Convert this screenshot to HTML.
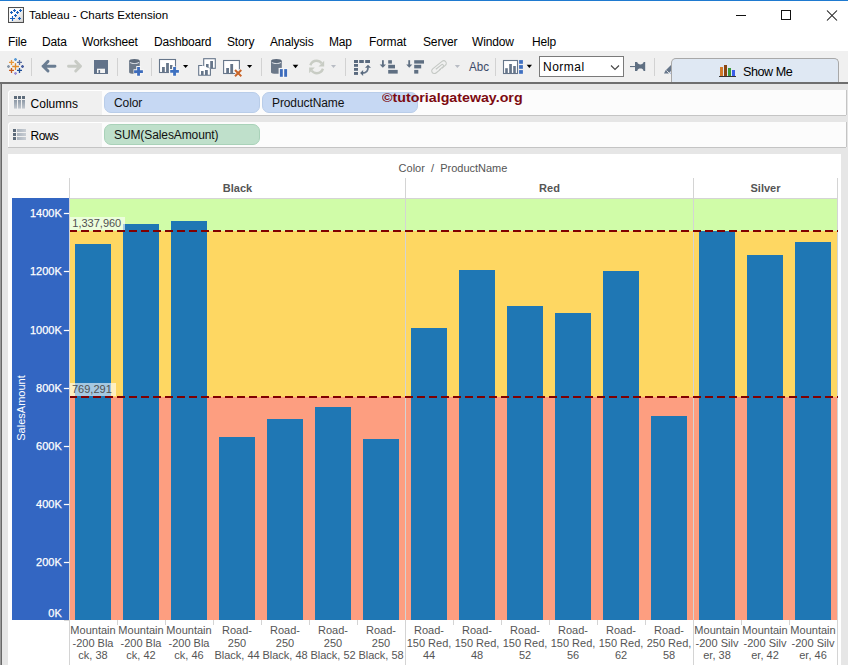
<!DOCTYPE html>
<html><head><meta charset="utf-8">
<style>
html,body{margin:0;padding:0;}
body{width:848px;height:665px;overflow:hidden;position:relative;background:#fff;font-family:"Liberation Sans",sans-serif;color:#000;}
.abs{position:absolute;}
#topline{left:0;top:0;width:848px;height:1px;background:#1f7ad0;}
#title{left:29px;top:8px;font-size:11.6px;color:#000;white-space:nowrap;}
.menu{position:absolute;top:34.6px;font-size:12px;letter-spacing:-0.15px;white-space:nowrap;}
#toolbar{left:0;top:51px;width:848px;height:31px;background:#f0f0f0;}
#tbline{left:0;top:82px;width:848px;height:2px;background:#6e6e6e;}
#work{left:0;top:84px;width:848px;height:581px;background:#e6e6e6;}
#leftline{left:0;top:84px;width:1px;height:581px;background:#9a9a9a;border-right:1px solid #686868;}
.shelf{position:absolute;left:8px;width:838px;height:25px;background:#fcfcfc;box-shadow:0 1px 0 #c4c4c4,1px 0 0 #c4c4c4;border-radius:4px 0 0 0;}
.shelflab{position:absolute;left:0;top:0;width:93px;height:24px;background:#f0f0f0;border-top:1px solid #fff;border-left:1px solid #fff;border-radius:4px 0 0 0;}
.shelftxt{position:absolute;left:22.6px;top:7px;font-size:12px;color:#000;}
.pill{position:absolute;height:19px;border:1px solid #b9cde9;border-radius:7px;font-size:12px;letter-spacing:-0.1px;color:#111;}
.pill span{position:absolute;left:9px;top:2.8px;}
#chart{left:8px;top:154px;width:833px;height:511px;background:#fff;}
</style></head><body>
<div class="abs" id="topline"></div>
<!-- title icon -->
<svg class="abs" style="left:8px;top:7px" width="16" height="16" viewBox="0 0 16 16">
<defs><linearGradient id="tig" x1="0" y1="0" x2="1" y2="1"><stop offset="0.5" stop-color="#ffffff"/><stop offset="0.52" stop-color="#f2f2f2"/><stop offset="1" stop-color="#d4d4d4"/></linearGradient></defs>
<rect x="0.5" y="0.5" width="15" height="15" fill="url(#tig)" stroke="#4f4f4f" stroke-width="1.1"/>
<g stroke="#1560bd" stroke-width="1.15">
<path d="M5.0 3.5h3M6.5 2.0v3"/>
<path d="M11.0 3.5h3M12.5 2.0v3"/>
<path d="M2.0 5.5h3M3.5 4.0v3"/>
<path d="M8.0 5.5h3M9.5 4.0v3"/>
<path d="M6.0 8.5h3M7.5 7.0v3"/>
<path d="M2.0 11.5h5M4.5 9.0v5"/>
<path d="M10.0 11.5h3M11.5 10.0v3"/>
</g>
</svg>
<div class="abs" id="title">Tableau - Charts Extension</div>
<!-- window controls -->
<svg class="abs" style="left:730px;top:8px" width="110" height="16" viewBox="0 0 110 16">
<path d="M6 7.5h10" stroke="#111" stroke-width="1"/>
<rect x="51.5" y="2.5" width="9" height="9" fill="none" stroke="#111"/>
<path d="M97 2.5l10 10M107 2.5l-10 10" stroke="#111" stroke-width="1.05"/>
</svg>
<div class="menu" style="left:8px">File</div>
<div class="menu" style="left:42px">Data</div>
<div class="menu" style="left:82px">Worksheet</div>
<div class="menu" style="left:154px">Dashboard</div>
<div class="menu" style="left:227px">Story</div>
<div class="menu" style="left:270px">Analysis</div>
<div class="menu" style="left:329px">Map</div>
<div class="menu" style="left:369px">Format</div>
<div class="menu" style="left:423px">Server</div>
<div class="menu" style="left:472px">Window</div>
<div class="menu" style="left:532px">Help</div>

<div class="abs" id="toolbar"></div>
<div class="abs" id="tbline"></div>
<!--TB-->
<svg class="abs" style="left:0;top:0" width="848" height="84" viewBox="0 0 848 84">
<!-- tableau logo -->
<g stroke-width="1.3" stroke-linecap="butt">
<path d="M12.2 66.5h6.8M15.5 63.2v6.8" stroke="#e08a2c"/>
<path d="M9 62.4h5M11.5 59.9v5" stroke="#e8963a"/>
<path d="M17 62.4h5M19.5 59.9v5" stroke="#5a6fa0"/>
<path d="M9 70.4h5M11.5 67.9v5" stroke="#c65a1e"/>
<path d="M17 70.4h5M19.5 67.9v5" stroke="#1f4f9a"/>
<path d="M14 59.5h3M15.5 58v3" stroke="#5b9bd5"/>
<path d="M14 73.4h3M15.5 71.9v3" stroke="#9b8fd8"/>
<path d="M7 66.5h3M8.5 65v3" stroke="#8a98a8"/>
<path d="M21 66.5h3M22.5 65v3" stroke="#4a5fa0"/>
</g>
<g fill="#d2d2d2">
<rect x="31" y="58" width="1" height="18"/>
<rect x="117" y="58" width="1" height="18"/>
<rect x="151" y="58" width="1" height="18"/>
<rect x="261" y="58" width="1" height="18"/>
<rect x="345" y="58" width="1" height="18"/>
<rect x="495" y="58" width="1" height="18"/>
<rect x="654" y="58" width="1" height="18"/>
</g>
<!-- back / forward -->
<path d="M55 66.2H43M48 61.4l-4.8 4.8 4.8 4.8" fill="none" stroke="#6a7d92" stroke-width="2.9" stroke-linecap="round" stroke-linejoin="round"/>
<path d="M68.5 66.2H80.5M75.7 61.4l4.8 4.8-4.8 4.8" fill="none" stroke="#c8cbc5" stroke-width="2.9" stroke-linecap="round" stroke-linejoin="round"/>
<!-- save -->
<rect x="94" y="60" width="14" height="14" fill="#62738a"/>
<rect x="97" y="68.7" width="8" height="4.3" fill="#f4f4f4"/>
<rect x="98.5" y="70" width="1.6" height="3" fill="#62738a"/>
<!-- datasource add -->
<path d="M129.1 61v11.2c0 1 2.4 1.6 5.35 1.6s5.35-.6 5.35-1.6V61z" fill="#6b7889"/>
<ellipse cx="134.45" cy="61" rx="5.35" ry="2" fill="#5d6a7b"/>
<path d="M129.8 62.2c1 1 3 1.3 4.65 1.3s3.65-.3 4.65-1.3" fill="none" stroke="#f4f6f8" stroke-width="0.9"/>
<path d="M133.5 71.55h10.4M138.55 66v10.6" stroke="#f6f6f6" stroke-width="4.6"/>
<path d="M134.1 71.55h8.8M138.55 67.1v8.6" stroke="#3d6cbc" stroke-width="2.8"/>
<!-- new sheet -->
<rect x="159.5" y="59.5" width="16" height="13" fill="#fff" stroke="#66768a" stroke-width="1.1"/>
<rect x="162" y="67" width="2.8" height="5.5" fill="#66768a"/>
<rect x="166.1" y="63" width="2.8" height="9.5" fill="#66768a"/>
<rect x="170" y="65" width="2.5" height="4" fill="#66768a"/>
<path d="M169 69.5h3v-3h4v3h3.5v4h-3.5v3h-4v-3h-3z" fill="#f8f8f8"/>
<path d="M170.2 71.4h8.7M174.55 67v8.7" stroke="#3d70c0" stroke-width="2.8"/>
<path d="M183 65h5.2l-2.6 3z" fill="#000"/>
<!-- duplicate -->
<rect x="203.7" y="58.7" width="11.6" height="9.6" fill="#fff" stroke="#66768a" stroke-width="1.1"/>
<rect x="206" y="64" width="2.6" height="4.3" fill="#66768a"/>
<rect x="210.2" y="61" width="2.8" height="7.3" fill="#66768a"/>
<path d="M202.4 65.5h-3.7v9.8h11.7v-6.5" fill="#fff" stroke="#66768a" stroke-width="1.1"/>
<rect x="201" y="71" width="2.6" height="4" fill="#66768a"/>
<rect x="205" y="70" width="2.8" height="5" fill="#66768a"/>
<!-- clear sheet -->
<rect x="223.6" y="60.5" width="15.8" height="13" fill="#fff" stroke="#66768a" stroke-width="1.1"/>
<rect x="226.2" y="68" width="2.8" height="5.5" fill="#66768a"/>
<rect x="230.3" y="64" width="2.8" height="9.5" fill="#66768a"/>
<path d="M235 70l6.3 6.3M241.3 70l-6.3 6.3" stroke="#f8f8f8" stroke-width="3.6"/>
<path d="M235 70l6.3 6.3M241.3 70l-6.3 6.3" stroke="#c8652a" stroke-width="2"/>
<path d="M247 65h5.2l-2.6 3z" fill="#000"/>
<!-- datasource pause -->
<path d="M271 61v11.2c0 1 2.4 1.6 5.4 1.6s5.4-.6 5.4-1.6V61z" fill="#6b7889"/>
<ellipse cx="276.4" cy="61" rx="5.4" ry="2" fill="#5d6a7b"/>
<path d="M271.7 62.2c1 1 3 1.3 4.7 1.3s3.7-.3 4.7-1.3" fill="none" stroke="#f4f6f8" stroke-width="0.9"/>
<rect x="278.6" y="67.9" width="9.6" height="9.8" fill="#f6f6f6"/>
<rect x="279.9" y="69.1" width="2.9" height="7.7" fill="#3d6cbc"/>
<rect x="284.2" y="69.1" width="2.9" height="7.7" fill="#3d6cbc"/>
<path d="M292.7 64.8h5.6l-2.8 3.4z" fill="#000"/>
<!-- refresh (disabled) -->
<path d="M310.3 65.2c1.2-3 3.4-4.4 6.2-4.4 2.2 0 4 1 5.2 2.6" fill="none" stroke="#c8ccc4" stroke-width="2.4"/>
<path d="M324.2 60.8v5.7h-5.7z" fill="#c8ccc4"/>
<path d="M323 68.8c-1.2 3-3.4 4.4-6.2 4.4-2.2 0-4-1-5.2-2.6" fill="none" stroke="#c8ccc4" stroke-width="2.4"/>
<path d="M309.1 73.3v-5.7h5.7z" fill="#c8ccc4"/>
<path d="M331 65h5l-2.5 3z" fill="#b8bcc4"/>
<!-- swap -->
<g fill="#5a6a7e">
<rect x="354" y="60" width="4" height="3"/><rect x="359.2" y="60" width="4.6" height="3"/><rect x="365.2" y="60" width="4.8" height="3"/>
<rect x="354" y="64" width="4" height="2.8"/><rect x="354" y="68" width="4" height="2.8"/><rect x="354" y="72" width="4" height="2.9"/>
</g>
<path d="M362.3 73c3.2 0 5.7-1.8 5.7-5.6" fill="none" stroke="#66768a" stroke-width="1.8"/>
<path d="M365 67.8h6l-3-3z" fill="#5a6a7e"/>
<path d="M360.1 72.9l3-3v6z" fill="#5a6a7e"/>
<!-- sort asc -->
<g fill="#5f6f82">
<rect x="382" y="60.2" width="1.8" height="5"/>
<path d="M379.7 64.5h6.3l-3.15 3.3z"/>
<rect x="388.2" y="60.2" width="3.7" height="3.4"/>
<rect x="388.2" y="64.8" width="6.8" height="3.6"/>
<rect x="388.2" y="69.9" width="9.5" height="3.7"/>
<!-- sort desc -->
<rect x="408.3" y="60.2" width="1.8" height="5"/>
<path d="M406.2 64.5h6.1l-3.05 3.3z"/>
<rect x="414.2" y="60.2" width="9.8" height="3.4"/>
<rect x="414.2" y="64.8" width="7" height="3.6"/>
<rect x="414.2" y="69.9" width="4.1" height="3.7"/>
</g>
<!-- paperclip -->
<g transform="translate(432.3 72.6) rotate(-39) scale(0.88)" fill="none" stroke="#c4c8c4" stroke-width="1.2">
<path d="M10 3H3A3 3 0 0 1 3 -3H16.6A3 3 0 0 1 16.6 3H11.5"/>
<path d="M5.5 -0.4H13.6A1.5 1.5 0 0 1 13.6 2.6H8"/>
</g>
<path d="M454.8 65h5.2l-2.6 3z" fill="#b8bcc4"/>
<!-- Abc -->
<text x="469" y="70.8" font-size="12.2" fill="#3c4a68" font-family="Liberation Sans" textLength="20" lengthAdjust="spacingAndGlyphs">Abc</text>
<!-- chart w/ dots -->
<rect x="503.5" y="60.5" width="14" height="13" fill="#fff" stroke="#66768a" stroke-width="1.1"/>
<rect x="505.2" y="68.2" width="2.6" height="5.3" fill="#66768a"/>
<rect x="509.2" y="64" width="2.7" height="9.5" fill="#66768a"/>
<rect x="513.2" y="66" width="2.6" height="7.5" fill="#66768a"/>
<g fill="#3f6fc0">
<rect x="519.1" y="60.1" width="3.8" height="3.7"/><rect x="519.1" y="65.1" width="3.8" height="3.7"/><rect x="519.1" y="70.1" width="3.8" height="3.7"/>
</g>
<path d="M526.7 64.7h5.3l-2.65 3.4z" fill="#000"/>
<!-- pin -->
<g fill="#5f6f82">
<rect x="630" y="66" width="5.5" height="1.1"/>
<path d="M635 62h2.2c.5 1.8 1.5 2.4 3.2 2.4s2.7-.6 3.2-2.4h1.6v9h-1.6c-.5-1.8-1.5-2.4-3.2-2.4s-2.7.6-3.2 2.4h-2.2z"/>
</g>
<!-- partial highlighter -->
<path d="M664 73.5l1.5-3 6-6 3 3-6 6z" fill="#66768a"/>
<path d="M666.5 70.5l2.5 2.5" stroke="#f0f0f0" stroke-width="0.9"/>
<path d="M670 73.5l2-2v2z" fill="#3d6cbc"/>
</svg>

<!--/TB-->
<!--TB2-->
<div class="abs" style="left:539px;top:56px;width:83px;height:19px;border:1px solid #7a7a7a;background:#fff;"></div>
<div class="abs" style="left:543px;top:60px;font-size:12px;letter-spacing:0.5px;color:#000;">Normal</div>
<svg class="abs" style="left:610px;top:64px" width="10" height="7" viewBox="0 0 10 7"><path d="M1 1.5l4 4 4-4" fill="none" stroke="#444" stroke-width="1.1"/></svg>
<div class="abs" style="left:671px;top:58px;width:166px;height:23px;border:1px solid #a8a8a8;border-bottom:none;border-radius:5px 5px 0 0;background:#dfe8f3;"></div>
<svg class="abs" style="left:719px;top:64px" width="18" height="14" viewBox="0 0 18 14">
<rect x="1" y="3" width="3" height="9" fill="#d27a2a"/><rect x="5" y="1" width="3" height="11" fill="#8a4614"/><rect x="9" y="4" width="3" height="8" fill="#3a9a3a"/><rect x="13" y="6" width="3" height="6" fill="#3b5ee8"/><rect x="0" y="12" width="17" height="1" fill="#333"/>
</svg>
<div class="abs" style="left:743px;top:64.8px;font-size:12.6px;letter-spacing:-0.45px;color:#000;">Show Me</div>
<!--/TB2-->
<div class="abs" id="work"></div>
<div class="abs" id="leftline"></div>

<div class="shelf" style="top:90px"><div class="shelflab"></div><div class="shelftxt">Columns</div></div>
<div class="shelf" style="top:122px"><div class="shelflab"></div><div class="shelftxt" style="letter-spacing:-0.6px">Rows</div></div>
<!--SHICONS-->
<svg class="abs" style="left:0;top:84px" width="40" height="70" viewBox="0 84 40 70">
<defs><linearGradient id="gcol" x1="0" y1="0" x2="0" y2="1"><stop offset="0" stop-color="#8d99a6"/><stop offset="1" stop-color="#c2c8cf"/></linearGradient>
<linearGradient id="grow" x1="0" y1="0" x2="1" y2="0"><stop offset="0" stop-color="#aab3bd"/><stop offset="1" stop-color="#c9ced4"/></linearGradient></defs>
<g fill="#5d6b7a"><rect x="14" y="96" width="3" height="3"/><rect x="18" y="96" width="3" height="3"/><rect x="22" y="96" width="3" height="3"/></g>
<g fill="url(#gcol)"><rect x="14" y="100" width="3" height="8.6"/><rect x="18" y="100" width="3" height="8.6"/><rect x="22" y="100" width="3" height="8.6"/></g>
<g fill="#5d6b7a"><rect x="13" y="129" width="3" height="3"/><rect x="13" y="133" width="3" height="3"/><rect x="13" y="137" width="3" height="3"/></g>
<g fill="url(#grow)"><rect x="17" y="129" width="9" height="3"/><rect x="17" y="133" width="9" height="3"/><rect x="17" y="137" width="9" height="3"/></g>
</svg>
<!--/SHICONS-->
<div class="pill" style="left:104px;top:92px;width:154px;background:#c6d8f3;"><span>Color</span></div>
<div class="pill" style="left:262px;top:92px;width:154px;background:#c6d8f3;"><span>ProductName</span></div>
<div class="pill" style="left:104px;top:124px;width:154px;background:#bfe0cb;border-color:#a9d2b9;"><span>SUM(SalesAmount)</span></div>

<div class="abs" id="wm" style="left:382px;top:91px;font-size:12px;font-weight:bold;letter-spacing:0px;transform:scaleX(1.185);transform-origin:0 0;color:#7c0a10;white-space:nowrap;">©tutorialgateway.org</div>
<div class="abs" id="chart"></div>
<!--CHART-->
<svg class="abs" style="left:0;top:0" width="848" height="665" viewBox="0 0 848 665">
<rect x="70" y="199" width="768" height="32" fill="#d0fca8"/>
<rect x="70" y="231" width="768" height="166" fill="#fed762"/>
<rect x="70" y="397" width="768" height="223" fill="#fd9e80"/>
<rect x="12" y="198" width="57" height="422" fill="#3366c2"/>
<g fill="#d4d4d4">
<rect x="69" y="178" width="1" height="487"/>
<rect x="405" y="178" width="1" height="487"/>
<rect x="693" y="178" width="1" height="487"/>
<rect x="837" y="178" width="1" height="487"/>
<rect x="69" y="198" width="769" height="1"/>
</g>
<g fill="#1f77b4">
<rect x="75" y="244" width="36" height="376"/>
<rect x="123" y="224" width="36" height="396"/>
<rect x="171" y="221" width="36" height="399"/>
<rect x="219" y="437" width="36" height="183"/>
<rect x="267" y="419" width="36" height="201"/>
<rect x="315" y="407" width="36" height="213"/>
<rect x="363" y="439" width="36" height="181"/>
<rect x="411" y="328" width="36" height="292"/>
<rect x="459" y="270" width="36" height="350"/>
<rect x="507" y="306" width="36" height="314"/>
<rect x="555" y="313" width="36" height="307"/>
<rect x="603" y="271" width="36" height="349"/>
<rect x="651" y="416" width="36" height="204"/>
<rect x="699" y="231" width="36" height="389"/>
<rect x="747" y="255" width="36" height="365"/>
<rect x="795" y="242" width="36" height="378"/>
</g>
<g fill="#d4d4d4">
<rect x="69" y="620" width="1" height="5"/>
<rect x="117" y="620" width="1" height="5"/>
<rect x="165" y="620" width="1" height="5"/>
<rect x="213" y="620" width="1" height="5"/>
<rect x="261" y="620" width="1" height="5"/>
<rect x="309" y="620" width="1" height="5"/>
<rect x="357" y="620" width="1" height="5"/>
<rect x="405" y="620" width="1" height="5"/>
<rect x="453" y="620" width="1" height="5"/>
<rect x="501" y="620" width="1" height="5"/>
<rect x="549" y="620" width="1" height="5"/>
<rect x="597" y="620" width="1" height="5"/>
<rect x="645" y="620" width="1" height="5"/>
<rect x="693" y="620" width="1" height="5"/>
<rect x="741" y="620" width="1" height="5"/>
<rect x="789" y="620" width="1" height="5"/>
</g>
<line x1="70" y1="231" x2="838" y2="231" stroke="#800000" stroke-width="2" stroke-dasharray="8 4" stroke-dashoffset="1"/>
<line x1="70" y1="397" x2="838" y2="397" stroke="#800000" stroke-width="2" stroke-dasharray="8 4" stroke-dashoffset="1"/>
<rect x="70" y="217" width="55" height="13" fill="#ffffff" fill-opacity="0.6"/>
<text x="72.3" y="227" font-size="11" fill="#505050">1,337,960</text>
<rect x="70" y="383" width="46" height="13" fill="#ffffff" fill-opacity="0.6"/>
<text x="72" y="393.3" font-size="11" fill="#505050">769,291</text>
<g fill="#ffffff" stroke="#ffffff" stroke-width="0.25" font-size="11" text-anchor="end">
<rect x="64" y="213" width="5" height="1"/>
<text x="61.8" y="217">1400K</text>
<rect x="64" y="271" width="5" height="1"/>
<text x="61.8" y="275">1200K</text>
<rect x="64" y="330" width="5" height="1"/>
<text x="61.8" y="334">1000K</text>
<rect x="64" y="388" width="5" height="1"/>
<text x="61.8" y="392">800K</text>
<rect x="64" y="446" width="5" height="1"/>
<text x="61.8" y="450">600K</text>
<rect x="64" y="504" width="5" height="1"/>
<text x="61.8" y="508">400K</text>
<rect x="64" y="562" width="5" height="1"/>
<text x="61.8" y="566">200K</text>
<text x="61.8" y="617">0K</text>
<rect x="64" y="620" width="5" height="1" fill="#d8d8d8" stroke="none"/>
</g>
<text transform="translate(24.8,408) rotate(-90)" font-size="11" fill="#fff" text-anchor="middle">SalesAmount</text>
<text x="453" y="172" font-size="11" fill="#555" text-anchor="middle" xml:space="preserve">Color  /  ProductName</text>
<g font-size="11" font-weight="bold" fill="#555" text-anchor="middle">
<text x="237.5" y="192">Black</text><text x="549.5" y="192">Red</text><text x="765.5" y="192">Silver</text>
</g>
<g font-size="11" fill="#555" text-anchor="middle">
<text x="93" y="634">Mountain</text>
<text x="93" y="646.5">-200 Bla</text>
<text x="93" y="658.5">ck, 38</text>
<text x="141" y="634">Mountain</text>
<text x="141" y="646.5">-200 Bla</text>
<text x="141" y="658.5">ck, 42</text>
<text x="189" y="634">Mountain</text>
<text x="189" y="646.5">-200 Bla</text>
<text x="189" y="658.5">ck, 46</text>
<text x="237" y="634">Road-</text>
<text x="237" y="646.5">250</text>
<text x="237" y="658.5">Black, 44</text>
<text x="285" y="634">Road-</text>
<text x="285" y="646.5">250</text>
<text x="285" y="658.5">Black, 48</text>
<text x="333" y="634">Road-</text>
<text x="333" y="646.5">250</text>
<text x="333" y="658.5">Black, 52</text>
<text x="381" y="634">Road-</text>
<text x="381" y="646.5">250</text>
<text x="381" y="658.5">Black, 58</text>
<text x="429" y="634">Road-</text>
<text x="429" y="646.5">150 Red,</text>
<text x="429" y="658.5">44</text>
<text x="477" y="634">Road-</text>
<text x="477" y="646.5">150 Red,</text>
<text x="477" y="658.5">48</text>
<text x="525" y="634">Road-</text>
<text x="525" y="646.5">150 Red,</text>
<text x="525" y="658.5">52</text>
<text x="573" y="634">Road-</text>
<text x="573" y="646.5">150 Red,</text>
<text x="573" y="658.5">56</text>
<text x="621" y="634">Road-</text>
<text x="621" y="646.5">150 Red,</text>
<text x="621" y="658.5">62</text>
<text x="669" y="634">Road-</text>
<text x="669" y="646.5">250 Red,</text>
<text x="669" y="658.5">58</text>
<text x="717" y="634">Mountain</text>
<text x="717" y="646.5">-200 Silv</text>
<text x="717" y="658.5">er, 38</text>
<text x="765" y="634">Mountain</text>
<text x="765" y="646.5">-200 Silv</text>
<text x="765" y="658.5">er, 42</text>
<text x="813" y="634">Mountain</text>
<text x="813" y="646.5">-200 Silv</text>
<text x="813" y="658.5">er, 46</text>
</g>
</svg>
<!--/CHART-->

</body></html>
